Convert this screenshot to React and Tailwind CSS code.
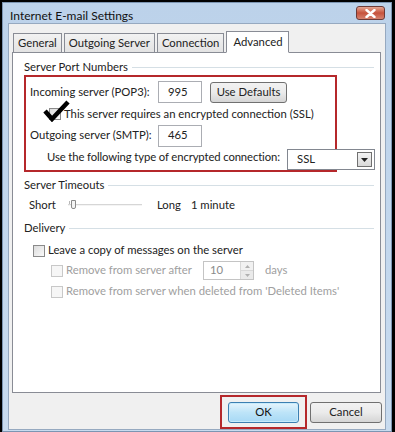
import React from 'react';

const font = { fontFamily: 'Lato, "Liberation Sans", sans-serif' };

const GroupTitle = ({ children }) => (
  <div className="flex items-center gap-1 pl-[11px] pr-[6px]">
    <span className="text-[11.3px] text-[#222] leading-none">{children}</span>
    <div className="flex-1 h-0 border-t border-[#d5dfe5] mt-[2px]" />
  </div>
);

const CheckBox = ({ disabled }) => (
  <span
    className={
      'inline-block w-[12px] h-[12px] border shrink-0 ' +
      (disabled ? 'border-[#c8c8c8] bg-[#f6f6f6]' : 'border-[#8a8a8a] bg-gradient-to-br from-[#dcdcdc] to-[#fafafa]')
    }
  />
);

const TextBox = ({ value, w }) => (
  <div className={`${w} h-[22px] border border-[#abadb3] bg-white flex items-center pl-[9px] text-[11.3px] text-[#222]`}>
    {value}
  </div>
);

const Tab = ({ label, active }) =>
  active ? (
    <div className="h-[22px] -mb-px px-[6px] pt-[2px] bg-white border border-[#898c95] border-b-white text-[11.3px] text-[#222] relative z-10">
      {label}
    </div>
  ) : (
    <div className="h-[19px] mt-[3px] px-[4px] bg-gradient-to-b from-[#f2f2f2] to-[#e3e3e3] border border-[#898c95] border-b-0 text-[11.3px] text-[#222] leading-[18px]">
      {label}
    </div>
  );

export default function App() {
  return (
    <div style={font} className="w-[395px] h-[432px] bg-black p-[2px] pr-[3px] pb-0 overflow-hidden whitespace-nowrap">
      <div className="h-full bg-gradient-to-b from-[#bcd2ea] to-[#c8dbef] border border-[#7c95b2] flex flex-col px-[5px] pb-[4px]">
        {/* title bar */}
        <div className="h-[20px] flex items-start justify-between">
          <span className="text-[12px] text-[#111] pt-[4px] pl-[2px]">Internet E-mail Settings</span>
          <div className="mt-[3px] mr-[1px] w-[29px] h-[14px] rounded-[3px] border border-[#6d3a37] bg-gradient-to-b from-[#e3a593] via-[#c6523c] to-[#d5826f] flex items-center justify-center">
            <svg width="11" height="9" viewBox="0 0 11 9">
              <path d="M1.5 1 L9.5 8 M9.5 1 L1.5 8" stroke="#fff" strokeWidth="2.4" strokeLinecap="round" />
            </svg>
          </div>
        </div>
        {/* client area */}
        <div className="flex-1 bg-[#f0f0f0] border border-[#96a9c0] flex flex-col px-[3px]">
          <div className="flex items-end gap-[2px] mt-[6px] pl-[1px]">
            <Tab label="General" />
            <Tab label="Outgoing Server" />
            <Tab label="Connection" />
            <Tab label="Advanced" active />
          </div>
          <div className="h-[341px] bg-white border border-[#898c95] mr-[1px] flex flex-col pt-[8px] relative">
            <GroupTitle>Server Port Numbers</GroupTitle>
            <div className="ml-[11px] mt-[3px] w-[313px] h-[97px] border-2 border-[#b5282b] flex flex-col pl-[4px] pt-[4px]">
              <div className="flex items-center h-[22px]">
                <span className="text-[11.3px] text-[#222] w-[128px]">Incoming server (POP3):</span>
                <TextBox value="995" w="w-[44px]" />
                <div className="ml-[8px] h-[21px] w-[77px] rounded-[3px] border border-[#707070] bg-gradient-to-b from-[#f2f2f2] via-[#ebebeb] to-[#d5d5d5] flex items-center justify-center text-[11.3px] text-[#222]">
                  Use Defaults
                </div>
              </div>
              <div className="flex items-center h-[22px] pl-[19px] relative">
                <CheckBox />
                <span className="ml-[3px] text-[11.3px] text-[#222]">This server requires an encrypted connection (SSL)</span>
                <svg className="absolute left-[13px] -top-[3px]" width="28" height="22" viewBox="0 0 28 22">
                  <path d="M2 11 L9 19 L25 2" stroke="#000" strokeWidth="4.5" fill="none" strokeLinejoin="miter" />
                </svg>
              </div>
              <div className="flex items-center h-[21px]">
                <span className="text-[11.3px] text-[#222] w-[128px]">Outgoing server (SMTP):</span>
                <TextBox value="465" w="w-[44px]" />
              </div>
              <div className="flex items-center h-[23px] pl-[17px]">
                <span className="text-[11.3px] text-[#222] tracking-[-0.12px]">Use the following type of encrypted connection:</span>
              </div>
            </div>
            <div className="absolute left-[274px] top-[96px] w-[88px] h-[21px] border border-[#828790] bg-white flex items-center">
              <span className="flex-1 pl-[9px] text-[11.3px] text-[#222]">SSL</span>
              <div className="w-[15px] h-[15px] mr-[2px] border border-[#707070] bg-gradient-to-b from-[#f3f3f3] to-[#d9d9d9] flex items-center justify-center">
                <svg width="7" height="4" viewBox="0 0 7 4"><path d="M0 0 H7 L3.5 4 Z" fill="#222" /></svg>
              </div>
            </div>
            <div className="mt-[7px]">
              <GroupTitle>Server Timeouts</GroupTitle>
            </div>
            <div className="flex items-center h-[22px] mt-[4px] pl-[16px] text-[11.3px] text-[#222]">
              <span>Short</span>
              <div className="ml-[12px] w-[74px] h-[10px] relative">
                <div className="absolute left-0 right-0 top-[3px] h-[2px] bg-[#d6d6d6] border-b border-[#f4f4f4]" />
                <div className="absolute left-[1px] top-0 w-[1px] h-[3px] bg-[#b8b8b8]" />
                <div className="absolute left-[3px] -top-[1px] w-[5px] h-[9px] border border-[#8a8a8a] bg-[#f4f4f4] rounded-b-[2px]" />
              </div>
              <span className="ml-[15px]">Long</span>
              <span className="ml-[10px]">1 minute</span>
            </div>
            <div className="mt-[5px]">
              <GroupTitle>Delivery</GroupTitle>
            </div>
            <div className="flex items-center h-[20px] mt-[8px] pl-[20px] text-[11.3px] text-[#222]">
              <CheckBox />
              <span className="ml-[3px]">Leave a copy of messages on the server</span>
            </div>
            <div className="flex items-center h-[20px] pl-[38px] text-[11.3px] text-[#a0a0a0]">
              <CheckBox disabled />
              <span className="ml-[3px] w-[137px]">Remove from server after</span>
              <div className="w-[51px] h-[19px] border border-[#c4c4c4] flex items-center bg-white">
                <span className="flex-1 pl-[6px] text-[#8a8a8a]">10</span>
                <div className="w-[13px] h-[17px] flex flex-col border-l border-[#d8d8d8]">
                  <div className="flex-1 bg-[#f1f1f1] border-b border-[#d8d8d8] flex items-center justify-center">
                    <svg width="5" height="3" viewBox="0 0 5 3"><path d="M0 3 H5 L2.5 0 Z" fill="#b0b0b0" /></svg>
                  </div>
                  <div className="flex-1 bg-[#eaeaea] flex items-center justify-center">
                    <svg width="5" height="3" viewBox="0 0 5 3"><path d="M0 0 H5 L2.5 3 Z" fill="#b0b0b0" /></svg>
                  </div>
                </div>
              </div>
              <span className="ml-[11px]">days</span>
            </div>
            <div className="flex items-center h-[22px] pl-[38px] text-[11.3px] text-[#a0a0a0]">
              <CheckBox disabled />
              <span className="ml-[3px]">Remove from server when deleted from 'Deleted Items'</span>
            </div>
          </div>
          <div className="flex justify-end items-center gap-[3px] mt-[2px] pr-[0px]">
            <div className="border-2 border-[#b5282b] px-[6px] pt-[5px] pb-[4px]">
              <div className="w-[71px] h-[21px] rounded-[3px] border border-[#3c7fb1] bg-gradient-to-b from-[#e6f4fc] via-[#bde4f8] to-[#a7d9f5] shadow-[inset_0_0_0_1px_#c8ebfb] flex items-center justify-center text-[11.3px] text-[#111]">
                OK
              </div>
            </div>
            <div className="w-[72px] h-[21px] rounded-[3px] border border-[#707070] bg-gradient-to-b from-[#f2f2f2] via-[#ebebeb] to-[#d5d5d5] flex items-center justify-center text-[11.3px] text-[#222]">
              Cancel
            </div>
          </div>
        </div>
      </div>
    </div>
  );
}
